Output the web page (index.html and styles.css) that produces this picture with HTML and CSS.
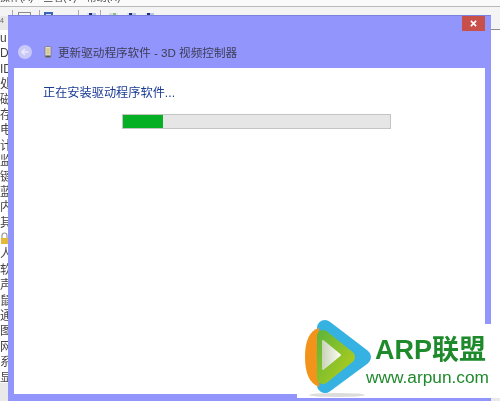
FILE: index.html
```html
<!DOCTYPE html>
<html lang="zh-CN">

<head>
    <meta charset="UTF-8">
    <meta name="viewport" content="width=device-width, initial-scale=1.0">
    <title>更新驱动程序软件</title>
    <link rel="stylesheet" href="styles.css">
</head>

<body>
    <div class="screen">
        <!-- Device manager behind the dialog -->
        <div class="menubar">
            <span>操作(A)</span>
            <span>查看(V)</span>
            <span>帮助(H)</span>
        </div>
        <div class="toolbar">
            <i class="sep ml-12"></i>
            <i class="tool tool-outline ml-5"></i>
            <i class="sep ml-8"></i>
            <i class="tool tool-blue ml-4"></i>
            <i class="tool tool-grey ml-9"></i>
            <i class="sep ml-5"></i>
            <i class="tool tool-dark ml-8"></i>
            <i class="sep ml-4"></i>
            <i class="tool tool-green ml-8"></i>
            <i class="tool tool-dark ml-9"></i>
            <i class="tool tool-dark ml-9"></i>
        </div>
        <div class="devices">
            <div class="tree-tab">4</div>
            <ul class="tree">
                <li>u</li>
                <li>DV</li>
                <li>ID</li>
                <li>处</li>
                <li>磁</li>
                <li>存</li>
                <li>电</li>
                <li>计</li>
                <li>监</li>
                <li>键</li>
                <li>蓝</li>
                <li>内</li>
                <li>其</li>
                <li><svg class="lock" viewBox="0 0 8 12"><path d="M1 7V3.500a2.500 2.500 0 0 1 5 0V7" fill="none" stroke="#9a9a9a" stroke-width="1.200"/><rect x="0" y="6" width="8" height="6" fill="#e2b93b"/></svg></li>
                <li>人</li>
                <li>软</li>
                <li>声</li>
                <li>鼠</li>
                <li>通</li>
                <li>图</li>
                <li>网</li>
                <li>系</li>
                <li>显</li>
            </ul>
        </div>

        <!-- Driver install dialog -->
        <div class="dialog">
            <button class="close">
                <svg viewBox="0 0 8 8"><path d="M1 1l6 6M7 1L1 7" stroke="#fff" stroke-width="1.800"/></svg>
            </button>
            <div class="dialog-head">
                <svg class="back" viewBox="0 0 14 14">
                    <circle cx="7" cy="7" r="7" fill="#c9c9f7"/>
                    <path d="M10.500 7H4M7 4L4 7l3 3" fill="none" stroke="#e9e9fb" stroke-width="1.600"/>
                </svg>
                <svg class="device" viewBox="0 0 8 14">
                    <rect x="0.500" y="0.500" width="7" height="13" rx="1" fill="#e8e8dc" stroke="#77778c"/>
                    <rect x="2" y="2" width="4" height="8" fill="#d9c98a"/>
                    <rect x="1" y="11" width="6" height="2" fill="#55556a"/>
                </svg>
                <span class="dialog-title">更新驱动程序软件 - 3D 视频控制器</span>
            </div>
            <div class="dialog-body">
                <h1>正在安装驱动程序软件...</h1>
                <div class="progress">
                    <div class="progress-fill"></div>
                </div>
            </div>
        </div>

        <!-- Site watermark -->
        <div class="watermark">
            <svg class="mark" viewBox="0 0 72 80">
                <defs>
                    <linearGradient id="leaf" gradientUnits="userSpaceOnUse" x1="12" y1="20" x2="52" y2="45">
                        <stop offset="0" stop-color="#5fb53a"/>
                        <stop offset="1" stop-color="#aacb1e"/>
                    </linearGradient>
                    <linearGradient id="glint" gradientUnits="userSpaceOnUse" x1="19" y1="0" x2="38" y2="0">
                        <stop offset="0" stop-color="#c9d3b8"/>
                        <stop offset="1" stop-color="#fbfdf4"/>
                    </linearGradient>
                </defs>
                <ellipse cx="34" cy="77" rx="28" ry="2" fill="#dcdcdc"/>
                <path d="M22 10L60 39L22 67Z" fill="#35b1e2" stroke="#35b1e2" stroke-width="16" stroke-linejoin="round"/>
                <path d="M16 10Q2 14 2 39Q2 64 16 69Q20 39 16 10Z" fill="#f2941c"/>
                <path d="M20 18L46 39L20 60Z" fill="url(#leaf)" stroke="url(#leaf)" stroke-width="12" stroke-linejoin="round"/>
                <path d="M20 23L37 37L20 51Z" fill="url(#glint)" stroke="url(#glint)" stroke-width="2" stroke-linejoin="round"/>
            </svg>
            <div class="brand">
                <div class="brand-name">ARP联盟</div>
                <div class="brand-url">www.arpun.com</div>
            </div>
        </div>
    </div>
</body>

</html>
```

FILE: styles.css
```css
* {
    box-sizing: border-box;
}

html,
body {
    margin: 0;
    padding: 0;
    overflow: hidden;
}

body {
    background-color: #fff;
    font-family: "Liberation Sans", "Noto Sans CJK SC", sans-serif;
}

.screen {
    position: relative;
    width: 500px;
    height: 401px;
    overflow: hidden;
    display: flex;
    flex-direction: column;
    filter: blur(0.4px);
}

.menubar {
    height: 7px;
    flex: none;
    display: flex;
    align-items: flex-end;
    gap: 10px;
    overflow: hidden;
    background-color: #fafafa;
    border-bottom: 1px solid #b9b9b9;
    font-size: 10px;
    line-height: 12px;
    color: #444;
    padding-bottom: 2px;
}

.toolbar {
    height: 23px;
    flex: none;
    display: flex;
    align-items: flex-start;
    padding-top: 3px;
    background-color: #f4f4f4;
    border-bottom: 1px solid #8f8f8f;
}

.ml-4 {
    margin-left: 4px;
}

.ml-5 {
    margin-left: 5px;
}

.ml-8 {
    margin-left: 8px;
}

.ml-9 {
    margin-left: 9px;
}

.ml-12 {
    margin-left: 12px;
}

.sep {
    width: 1px;
    height: 12px;
    background-color: #aaa;
}

.tool {
    width: 9px;
    height: 12px;
    margin-top: 3px;
}

.tool-outline {
    width: 13px;
    margin-top: 2px;
    border: 1px solid #8a8a8a;
    background-color: #f4f4f4;
}

.tool-blue {
    margin-top: 2px;
    border: 2px solid #3b63b8;
    background-color: #cdd8ee;
}

.tool-grey {
    width: 11px;
    margin-top: 5px;
    background-color: #8d8d95;
}

.tool-dark {
    background: linear-gradient(90deg, #dfe4ee 25%, #1d2f7a 25%, #1d2f7a 60%, #b9c6e2 60%);
}

.tool-green {
    background: linear-gradient(90deg, #d5e2cf 40%, #8fc08a 40%, #8fc08a 75%, #e4e8e0 75%);
}

.devices {
    flex: 1;
    background-color: #e9e9e9;
    position: relative;
}

.tree-tab {
    position: absolute;
    top: -14px;
    left: 0;
    width: 8px;
    height: 14px;
    font-size: 7px;
    line-height: 10px;
    color: #666;
    background-color: #e8e8e8;
}

.tree {
    list-style: none;
    margin: 0;
    padding: 1px 0 0;
    height: 353px;
    overflow: hidden;
    background-color: #fff;
    font-size: 12px;
    line-height: 15.4px;
    color: #444;
}

.tree li {
    height: 15.4px;
}

.lock {
    width: 8px;
    height: 12px;
    margin-left: 1px;
    margin-top: 1px;
    display: block;
}

.dialog {
    position: absolute;
    top: 15px;
    left: 8px;
    width: 483px;
    height: 386px;
    display: flex;
    flex-direction: column;
    padding: 0 6px 7px;
    background-color: #9295fb;
    border-top: 1px solid #7d80dd;
}

.close {
    position: absolute;
    top: 0;
    right: 6px;
    width: 23px;
    height: 15px;
    padding: 0;
    border: none;
    background-color: #c94f4b;
    display: flex;
    align-items: center;
    justify-content: center;
}

.close svg {
    width: 7px;
    height: 7px;
}

.dialog-head {
    height: 52px;
    flex: none;
    display: flex;
    align-items: center;
    padding-top: 20px;
    color: #3d3d55;
}

.back {
    width: 14px;
    height: 14px;
    margin-left: 4px;
}

.device {
    width: 8px;
    height: 12px;
    margin-left: 12px;
}

.dialog-title {
    margin-left: 6px;
    font-size: 11.6px;
}

.dialog-body {
    flex: 1;
    background-color: #fff;
    padding: 17px 29px;
}

.dialog-body h1 {
    margin: 0;
    font-size: 12.2px;
    font-weight: 400;
    line-height: 17px;
    color: #1a3b94;
}

.progress {
    width: 269px;
    height: 15px;
    margin-top: 12px;
    margin-left: 79px;
    background-color: #e6e6e6;
    border: 1px solid #c4c4c4;
}

.progress-fill {
    width: 40px;
    height: 100%;
    background-color: #06b025;
}

.watermark {
    position: absolute;
    top: 324px;
    left: 297px;
    width: 203px;
    height: 74px;
    display: flex;
    background-color: #fff;
}

.mark {
    width: 72px;
    height: 80px;
    flex: none;
    margin-top: -6px;
    margin-left: 6px;
}

.brand {
    margin-left: -9px;
    display: flex;
    flex-direction: column;
    color: #1f8a2c;
}

.brand-name {
    margin-top: 9px;
    margin-left: 9px;
    font-size: 27px;
    font-weight: 700;
    line-height: 34px;
    white-space: nowrap;
}

.brand-url {
    font-size: 17.3px;
    line-height: 20px;
    white-space: nowrap;
}
```
